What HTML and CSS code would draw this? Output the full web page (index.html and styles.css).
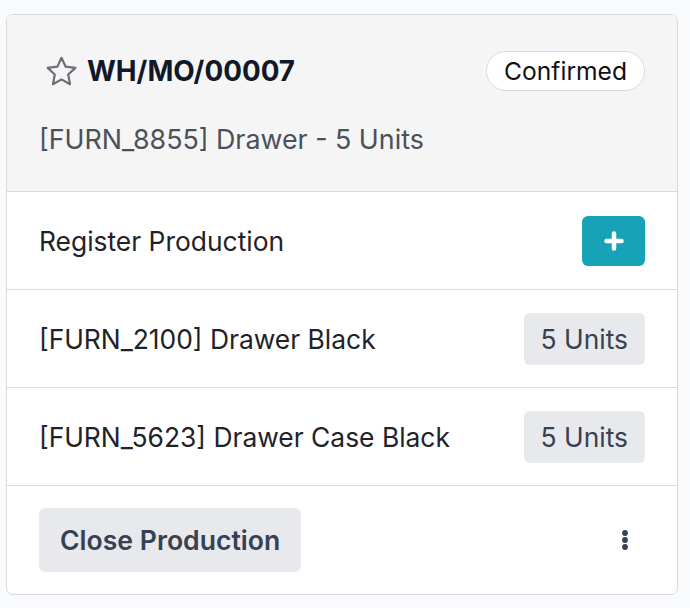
FILE: index.html
```html
<!DOCTYPE html>
<html>
<head>
    <meta charset="UTF-8">
    <title>WH/MO/00007</title>
    <link rel="stylesheet" href="styles.css">
</head>
<body>

<div class="card">
    <div class="card-head">
        <div class="head-top">
            <div class="title">
                <svg class="star" width="35" height="35" viewBox="0 0 24 24">
                    <path d="M12 2.6l2.85 6.1 6.65.8-4.9 4.6 1.25 6.6L12 17.4l-5.85 3.3 1.25-6.6-4.9-4.6 6.65-.8z" fill="none" stroke="#6c7079" stroke-width="1.5" stroke-linejoin="round"/>
                </svg>
                <span>WH/MO/00007</span>
            </div>
            <span class="state">Confirmed</span>
        </div>
        <div class="subtitle">[FURN_8855] Drawer - 5 Units</div>
    </div>

    <div class="row">
        <span>Register Production</span>
        <a href="javascript:;" class="btn-add">
            <svg width="22" height="22" viewBox="0 0 22 22">
                <path d="M11 3.5v15M3.5 11h15" stroke="#fff" stroke-width="4.5" stroke-linecap="round"/>
            </svg>
        </a>
    </div>
    <div class="row">
        <span>[FURN_2100] Drawer Black</span>
        <span class="qty">5 Units</span>
    </div>
    <div class="row">
        <span>[FURN_5623] Drawer Case Black</span>
        <span class="qty">5 Units</span>
    </div>

    <div class="card-foot">
        <a href="javascript:;" class="btn-close">Close Production</a>
        <a href="javascript:;" class="kebab">
            <svg width="10" height="22" viewBox="0 0 10 22">
                <circle cx="5" cy="4" r="2.9" fill="#374151"/>
                <circle cx="5" cy="11" r="2.9" fill="#374151"/>
                <circle cx="5" cy="18" r="2.9" fill="#374151"/>
            </svg>
        </a>
    </div>
</div>

</body>
</html>
```

FILE: styles.css
```css
* { margin: 0; padding: 0; box-sizing: border-box; text-decoration: none;}
body { background: #f9fafb; padding: 14px 12px 0 6px; font-family: Inter, "Noto Sans", sans-serif; color: #1f2328;}
.card { width: 672px; background: #fff; border: 1px solid #d8dadd; border-radius: 7px; overflow: hidden;}
.card-head { background: #f5f5f5; padding: 36px 32px 34px; border-bottom: 1px solid #d8dadd;}
.head-top { display: flex; justify-content: space-between; align-items: center; height: 40px;}
.title { display: flex; align-items: center; gap: 8px; font-size: 27.8px; font-weight: 700; color: #111827; margin-left: 5px;}
.star { display: block;}
.state { display: flex; align-items: center; height: 40px; padding: 0 17px; background: #fff; border: 1px solid #d8dadd; border-radius: 20px; font-size: 24.6px; color: #111;}
.subtitle { margin-top: 30px; font-size: 26.8px; line-height: 36px; color: #4b5059;}
.row { display: flex; justify-content: space-between; align-items: center; min-height: 98px; padding: 0 32px; border-bottom: 1px solid #d8dadd; font-size: 26.4px; color: #1f2328;}
.btn-add { display: flex; align-items: center; justify-content: center; width: 63px; height: 50px; background: #17a2b8; border-radius: 6px;}
.qty { display: flex; align-items: center; height: 52px; padding: 0 17px; background: #e7e9ed; border-radius: 6px; color: #374151;}
.card-foot { display: flex; justify-content: space-between; align-items: center; padding: 22px 32px 22px;}
.btn-close { display: flex; align-items: center; height: 64px; padding: 0 21px; background: #e7e9ed; border-radius: 6px; font-size: 26.6px; font-weight: 600; color: #374151;}
.kebab { display: block; padding: 0 15px 0 0;}
.kebab svg { display: block;}
```
